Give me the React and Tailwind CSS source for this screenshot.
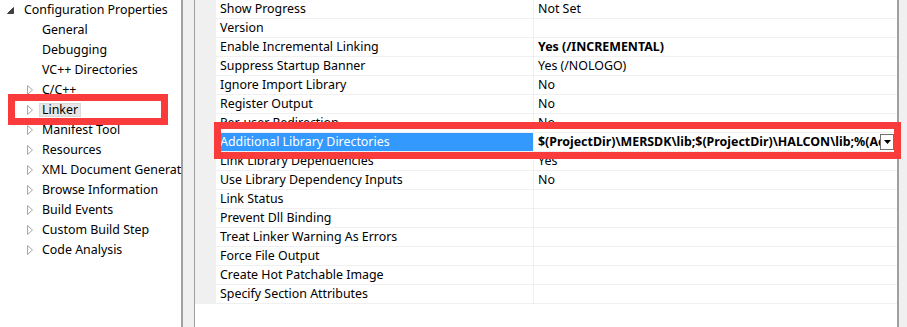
import React from 'react';

const treeItems = [
  { label: 'General', arrow: false },
  { label: 'Debugging', arrow: false },
  { label: 'VC++ Directories', arrow: false },
  { label: 'C/C++', arrow: true },
  { label: 'Linker', arrow: true, selected: true },
  { label: 'Manifest Tool', arrow: true },
  { label: 'Resources', arrow: true },
  { label: 'XML Document Generat', arrow: true },
  { label: 'Browse Information', arrow: true },
  { label: 'Build Events', arrow: true },
  { label: 'Custom Build Step', arrow: true },
  { label: 'Code Analysis', arrow: true },
];

const rows = [
  { name: 'Show Progress', value: 'Not Set' },
  { name: 'Version', value: '' },
  { name: 'Enable Incremental Linking', value: 'Yes (/INCREMENTAL)', bold: true },
  { name: 'Suppress Startup Banner', value: 'Yes (/NOLOGO)' },
  { name: 'Ignore Import Library', value: 'No' },
  { name: 'Register Output', value: 'No' },
  { name: 'Per-user Redirection', value: 'No' },
  { name: 'Additional Library Directories', value: '$(ProjectDir)\\MERSDK\\lib;$(ProjectDir)\\HALCON\\lib;%(AdditionalLibraryDirectories)', bold: true, selected: true },
  { name: 'Link Library Dependencies', value: 'Yes' },
  { name: 'Use Library Dependency Inputs', value: 'No' },
  { name: 'Link Status', value: '' },
  { name: 'Prevent Dll Binding', value: '' },
  { name: 'Treat Linker Warning As Errors', value: '' },
  { name: 'Force File Output', value: '' },
  { name: 'Create Hot Patchable Image', value: '' },
  { name: 'Specify Section Attributes', value: '' },
];

function Collapsed() {
  return (
    <svg width="7" height="10" viewBox="0 0 7 10" className="shrink-0">
      <path d="M0.5 0.5 L5.5 5 L0.5 9.5 Z" fill="white" stroke="#a6a6a6" />
    </svg>
  );
}

function Expanded() {
  return (
    <svg width="7" height="7" viewBox="0 0 7 7" className="shrink-0">
      <path d="M6.5 0.5 L6.5 6.5 L0.5 6.5 Z" fill="#404040" stroke="#404040" />
    </svg>
  );
}

function App() {
  return (
    <div
      className="relative w-[907px] h-[327px] flex bg-white overflow-hidden text-[12.4px] text-black"
      style={{ fontFamily: '"Noto Sans", "Noto Sans CJK SC", sans-serif' }}
    >
      {/* tree */}
      <div className="w-[183px] shrink-0 border-r-2 border-[#a0a0a0]">
        <div className="h-[20px] flex items-center pl-[7px] gap-[10px] whitespace-nowrap">
          <Expanded />
          <span>Configuration Properties</span>
        </div>
        {treeItems.map((item) => (
          <div key={item.label} className="h-[20px] flex items-center whitespace-nowrap">
            <div className="w-[42px] shrink-0 flex justify-end pr-[8px]">
              {item.arrow && <Collapsed />}
            </div>
            <span
              className={
                item.selected
                  ? '-ml-[3px] px-[2px] h-[14px] leading-[12px] bg-[#e6e6e6] border border-[#d9d9d9]'
                  : ''
              }
            >
              {item.label}
            </span>
          </div>
        ))}
      </div>

      {/* splitter */}
      <div className="w-[12px] shrink-0 bg-[#f0f0f0] border-r border-[#a0a0a0]" />

      {/* property grid */}
      <div className="flex-1 min-w-0">
        {rows.map((row) => (
          <div key={row.name} className="flex h-[19px] bg-[#f0f0f0]">
            <div className="w-[21px] shrink-0" />
            <div
              className={
                'w-[318px] shrink-0 border-r border-b border-[#f0f0f0] pl-[4px] flex items-center whitespace-nowrap overflow-hidden ' +
                (row.selected ? 'bg-[#3399ff] text-white' : 'bg-white')
              }
            >
              {row.name}
            </div>
            <div className="flex-1 min-w-0 bg-white border-b border-[#f0f0f0] pl-[4px] pr-[3px] flex items-center">
              <span className={'flex-1 min-w-0 whitespace-nowrap overflow-hidden ' + (row.bold ? 'font-bold' : '')}>
                {row.value}
              </span>
              {row.selected && (
                <div className="w-[14px] h-[16px] shrink-0 border border-[#707070] bg-white flex items-center justify-center">
                  <svg width="7" height="4" viewBox="0 0 7 4">
                    <path d="M0 0 L7 0 L3.5 4 Z" fill="black" />
                  </svg>
                </div>
              )}
            </div>
          </div>
        ))}
      </div>

      {/* right edge */}
      <div className="w-[10px] shrink-0 bg-[#f0f0f0] border-l-2 border-[#a0a0a0]" />

      {/* red annotation boxes */}
      <div className="absolute left-[8px] top-[94px] w-[160px] h-[31px] border-[7px] border-[#fa3b3b]" />
      <div className="absolute left-[214px] top-[122px] w-[687px] h-[37px] border-[7px] border-[#fa3b3b]" />
    </div>
  );
}

export default App;
